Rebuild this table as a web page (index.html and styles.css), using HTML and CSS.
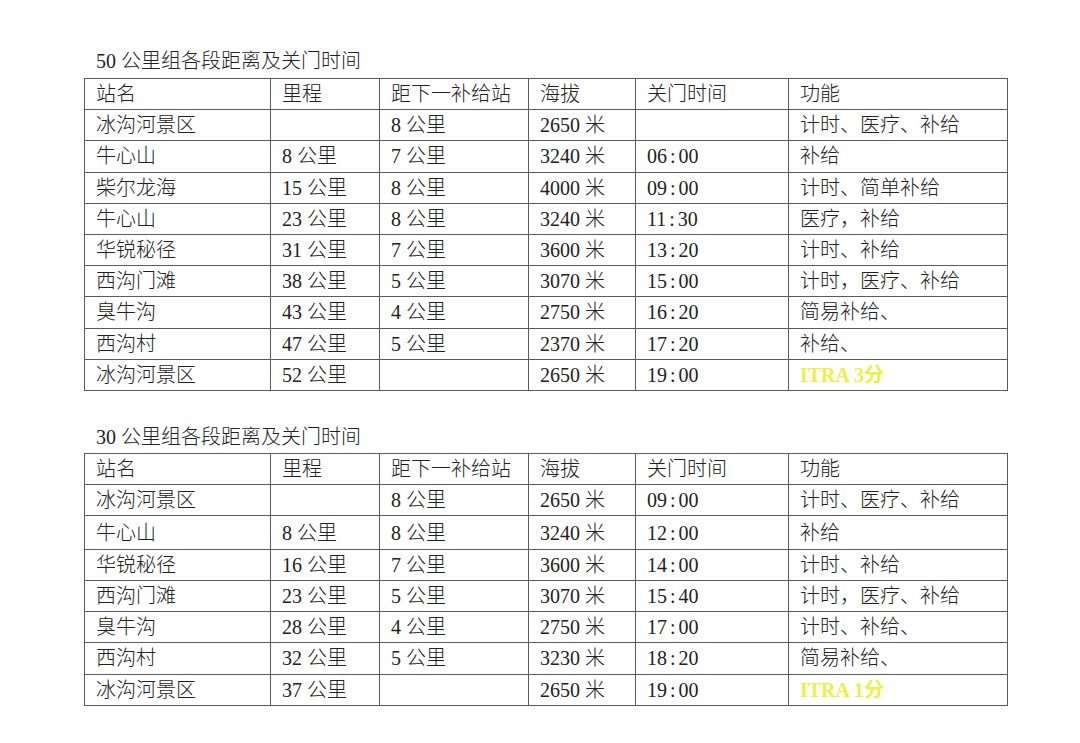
FILE: index.html
```html
<!DOCTYPE html>
<html lang="zh-CN">
<head>
<meta charset="utf-8">
<title>关门时间</title>
<link rel="stylesheet" href="styles.css">
</head>
<body>
<div class="page">
  <section class="group">
    <div class="title">50 公里组各段距离及关门时间</div>
    <table class="sheet t50">
      <colgroup>
        <col class="c1"><col class="c2"><col class="c3"><col class="c4"><col class="c5"><col class="c6">
      </colgroup>
      <tr><td>站名</td><td>里程</td><td>距下一补给站</td><td>海拔</td><td>关门时间</td><td>功能</td></tr>
      <tr><td>冰沟河景区</td><td></td><td>8 公里</td><td>2650 米</td><td></td><td>计时、医疗、补给</td></tr>
      <tr><td>牛心山</td><td>8 公里</td><td>7 公里</td><td>3240 米</td><td>06<span class="colon">:</span>00</td><td>补给</td></tr>
      <tr><td>柴尔龙海</td><td>15 公里</td><td>8 公里</td><td>4000 米</td><td>09<span class="colon">:</span>00</td><td>计时、简单补给</td></tr>
      <tr><td>牛心山</td><td>23 公里</td><td>8 公里</td><td>3240 米</td><td>11<span class="colon">:</span>30</td><td>医疗，补给</td></tr>
      <tr><td>华锐秘径</td><td>31 公里</td><td>7 公里</td><td>3600 米</td><td>13<span class="colon">:</span>20</td><td>计时、补给</td></tr>
      <tr><td>西沟门滩</td><td>38 公里</td><td>5 公里</td><td>3070 米</td><td>15<span class="colon">:</span>00</td><td>计时，医疗、补给</td></tr>
      <tr><td>臭牛沟</td><td>43 公里</td><td>4 公里</td><td>2750 米</td><td>16<span class="colon">:</span>20</td><td>简易补给、</td></tr>
      <tr><td>西沟村</td><td>47 公里</td><td>5 公里</td><td>2370 米</td><td>17<span class="colon">:</span>20</td><td>补给、</td></tr>
      <tr><td>冰沟河景区</td><td>52 公里</td><td></td><td>2650 米</td><td>19<span class="colon">:</span>00</td><td class="itra">ITRA 3分</td></tr>
    </table>
  </section>
  <section class="group second">
    <div class="title">30 公里组各段距离及关门时间</div>
    <table class="sheet t30">
      <colgroup>
        <col class="c1"><col class="c2"><col class="c3"><col class="c4"><col class="c5"><col class="c6">
      </colgroup>
      <tr><td>站名</td><td>里程</td><td>距下一补给站</td><td>海拔</td><td>关门时间</td><td>功能</td></tr>
      <tr><td>冰沟河景区</td><td></td><td>8 公里</td><td>2650 米</td><td>09<span class="colon">:</span>00</td><td>计时、医疗、补给</td></tr>
      <tr class="tall"><td>牛心山</td><td>8 公里</td><td>8 公里</td><td>3240 米</td><td>12<span class="colon">:</span>00</td><td>补给</td></tr>
      <tr><td>华锐秘径</td><td>16 公里</td><td>7 公里</td><td>3600 米</td><td>14<span class="colon">:</span>00</td><td>计时、补给</td></tr>
      <tr><td>西沟门滩</td><td>23 公里</td><td>5 公里</td><td>3070 米</td><td>15<span class="colon">:</span>40</td><td>计时，医疗、补给</td></tr>
      <tr><td>臭牛沟</td><td>28 公里</td><td>4 公里</td><td>2750 米</td><td>17<span class="colon">:</span>00</td><td>计时、补给、</td></tr>
      <tr><td>西沟村</td><td>32 公里</td><td>5 公里</td><td>3230 米</td><td>18<span class="colon">:</span>20</td><td>简易补给、</td></tr>
      <tr><td>冰沟河景区</td><td>37 公里</td><td></td><td>2650 米</td><td>19<span class="colon">:</span>00</td><td class="itra">ITRA 1分</td></tr>
    </table>
  </section>
</div>
</body>
</html>
```
FILE: styles.css
```css
html, body {
  margin: 0;
  padding: 0;
  background: #ffffff;
}
body {
  font-family: "Liberation Serif", "Noto Sans CJK SC", serif;
  font-size: 20px;
  color: #222222;
}
.page {
  padding: 49px 0 0 84px;
}
.group.second {
  margin-top: 34px;
}
.title {
  height: 24px;
  line-height: 24px;
  padding-left: 12px;
  margin-bottom: 5px;
  font-weight: 300;
}
.group.second .title {
  margin-bottom: 4px;
}
.sheet {
  border-collapse: collapse;
  width: 923px;
  table-layout: fixed;
}
.sheet td {
  border: 1px solid #5c5c5c;
  padding: 0 0 0 11px;
  line-height: 24px;
  vertical-align: middle;
  white-space: nowrap;
  font-weight: 300;
}
.colon {
  padding: 0 3px;
}
.t50 tr { height: 31.2px; }
.t30 tr { height: 31.2px; }
.t30 tr.tall { height: 33.5px; }
.c1 { width: 186px; }
.c2 { width: 109px; }
.c3 { width: 149px; }
.c4 { width: 107px; }
.c5 { width: 153px; }
.c6 { width: 219px; }
.sheet td.itra {
  color: #eef044;
  font-weight: 700;
}
```
